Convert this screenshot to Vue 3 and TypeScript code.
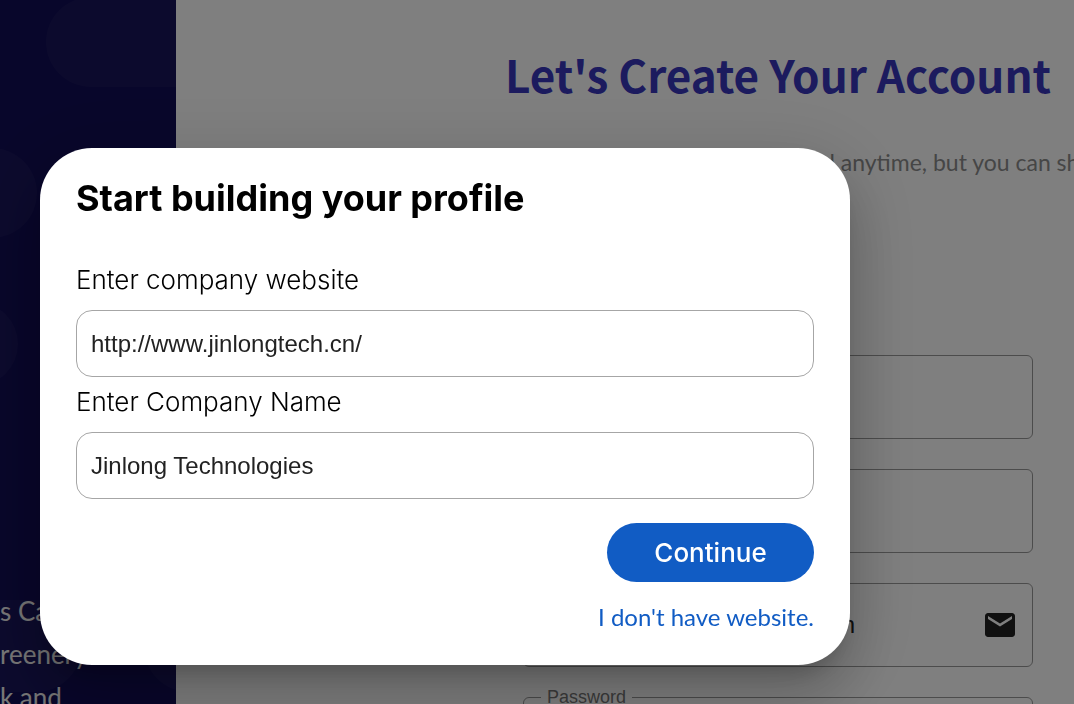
<script setup lang="ts">
import { ref } from 'vue'

const website = ref('http://www.jinlongtech.cn/')
const companyName = ref('Jinlong Technologies')
const firstName = ref('')
const lastName = ref('')
const email = ref('n')
const password = ref('')

const promoLines: string[] = ['s Car', 'reenery', 'k and']
</script>

<template>
  <div class="page">
    <aside class="promo">
      <svg class="promo-shapes" width="176" height="704" viewBox="0 0 176 704" aria-hidden="true">
        <rect x="46" y="-3" width="240" height="90" rx="45" />
        <rect x="-120" y="148" width="157" height="90" rx="45" />
        <rect x="-120" y="302" width="138" height="84" rx="42" />
        <rect x="-120" y="600" width="202" height="92" rx="46" />
        <rect x="144" y="602" width="160" height="90" rx="45" />
      </svg>
      <p class="promo-text">
        <span v-for="line in promoLines" :key="line">{{ line }}</span>
      </p>
    </aside>

    <main class="signup">
      <h1>Let's Create Your Account</h1>
      <p class="subtitle">d anytime, but you can sh</p>
      <form class="fields" @submit.prevent>
        <div class="field"><input v-model="firstName" type="text" aria-label="First name" /></div>
        <div class="field"><input v-model="lastName" type="text" aria-label="Last name" /></div>
        <div class="field">
          <input v-model="email" class="email" type="text" aria-label="Email" />
          <svg class="mail" viewBox="2 4 20 16" aria-hidden="true">
            <path d="M20 4H4c-1.100 0-1.990.9-1.990 2L2 18c0 1.100.9 2 2 2h16c1.100 0 2-.9 2-2V6c0-1.100-.9-2-2-2zm0 4l-8 5-8-5V6l8 5 8-5v2z" />
          </svg>
        </div>
        <fieldset class="notched">
          <legend><label for="password">Password</label></legend>
          <input id="password" v-model="password" type="password" />
        </fieldset>
      </form>
    </main>

    <div class="backdrop">
      <section class="dialog" role="dialog" aria-modal="true" aria-labelledby="dialog-title">
        <h2 id="dialog-title">Start building your profile</h2>
        <form @submit.prevent>
          <label for="website">Enter company website</label>
          <input id="website" v-model="website" type="text" />
          <label for="company">Enter Company Name</label>
          <input id="company" v-model="companyName" type="text" />
          <div class="actions">
            <button type="submit">Continue</button>
            <a href="#">I don't have website.</a>
          </div>
        </form>
      </section>
    </div>
  </div>
</template>

<style>
body {
  margin: 0;
}
</style>

<style scoped>
.page {
  display: flex;
  height: 100vh;
  overflow: hidden;
  background: #fff;
  font-family: 'Liberation Sans', Arial, sans-serif;
}

.page * {
  box-sizing: border-box;
}

h1,
h2,
p {
  margin: 0;
}

.promo {
  position: relative;
  flex: 0 0 176px;
  overflow: hidden;
  background: #110d56;
}

.promo-shapes {
  position: absolute;
  inset: 0;
  fill: rgba(255, 255, 255, 0.035);
}

.promo-text {
  display: flex;
  flex-direction: column;
  padding-top: 590px;
  font-family: Lato, sans-serif;
  font-size: 26px;
  line-height: 43px;
  color: #eee;
  white-space: nowrap;
}

.signup {
  flex: 1;
  min-width: 0;
  padding: 44px 41px 0 347px;
}

h1 {
  display: flex;
  justify-content: center;
  font-family: 'Noto Sans CJK SC', sans-serif;
  font-size: 44px;
  font-weight: 700;
  line-height: 60px;
  color: #3936bd;
  white-space: nowrap;
}

.subtitle {
  margin-top: 40px;
  padding-left: 299px;
  font-family: Lato, sans-serif;
  font-size: 23px;
  line-height: 36px;
  color: #8c8c8c;
  white-space: nowrap;
}

.fields {
  display: flex;
  flex-direction: column;
  gap: 30px;
  margin-top: 175px;
}

.field {
  display: flex;
  align-items: center;
  height: 84px;
  padding-right: 17px;
  border: 1px solid #999;
  border-radius: 6px;
}

.field input,
.notched input {
  flex: 1;
  min-width: 0;
  width: 100%;
  height: 60px;
  padding: 0 20px;
  border: 0;
  outline: 0;
  background: transparent;
  font: 24px 'Liberation Sans', Arial, sans-serif;
  color: #222;
}

.field .email {
  padding-right: 130px;
  text-align: right;
}

.mail {
  width: 30px;
  height: 24px;
  fill: #222;
}

.notched {
  height: 94px;
  margin: -10px 0 0;
  padding: 0 0 0 17px;
  border: 1px solid #999;
  border-radius: 6px;
}

.notched legend {
  padding: 0 6px;
  font-size: 18px;
  line-height: 20px;
  color: #777;
}

.backdrop {
  position: fixed;
  inset: 0;
  display: flex;
  align-items: flex-start;
  padding: 148px 224px 39px 40px;
  background: rgba(0, 0, 0, 0.5);
}

.dialog {
  flex: 1;
  padding: 26px 36px 31px;
  border-radius: 52px;
  background: #fff;
  box-shadow:
    0 16px 22px -10px rgba(0, 0, 0, 0.2),
    0 36px 57px 4px rgba(0, 0, 0, 0.14),
    0 14px 69px 12px rgba(0, 0, 0, 0.12);
}

.dialog h2 {
  margin-bottom: 36px;
  font-family: Inter, sans-serif;
  font-size: 36px;
  font-weight: 700;
  line-height: 48px;
  color: #000;
}

.dialog form {
  display: flex;
  flex-direction: column;
}

.dialog label {
  padding: 4px 0 12px;
  font-family: Inter, sans-serif;
  font-size: 26px;
  font-weight: 300;
  line-height: 36px;
  color: #000;
}

.dialog input {
  height: 67px;
  padding: 0 14px;
  border: 1px solid #a6a6a6;
  border-radius: 16px;
  outline: 0;
  background: #fff;
  font: 24px 'Liberation Sans', Arial, sans-serif;
  color: #222;
}

.dialog input + label {
  padding: 7px 0 12px;
}

.actions {
  display: flex;
  flex-direction: column;
  align-items: flex-end;
  gap: 18px;
  margin-top: 24px;
}

.actions button {
  width: 207px;
  height: 59px;
  padding: 0;
  border: 0;
  border-radius: 30px;
  background: #115cc4;
  font-family: Inter, sans-serif;
  font-size: 26px;
  font-weight: 500;
  color: #fff;
  cursor: pointer;
}

.actions a {
  font-family: Lato, sans-serif;
  font-size: 24px;
  line-height: 34px;
  color: #115cc4;
  text-decoration: none;
}
</style>
